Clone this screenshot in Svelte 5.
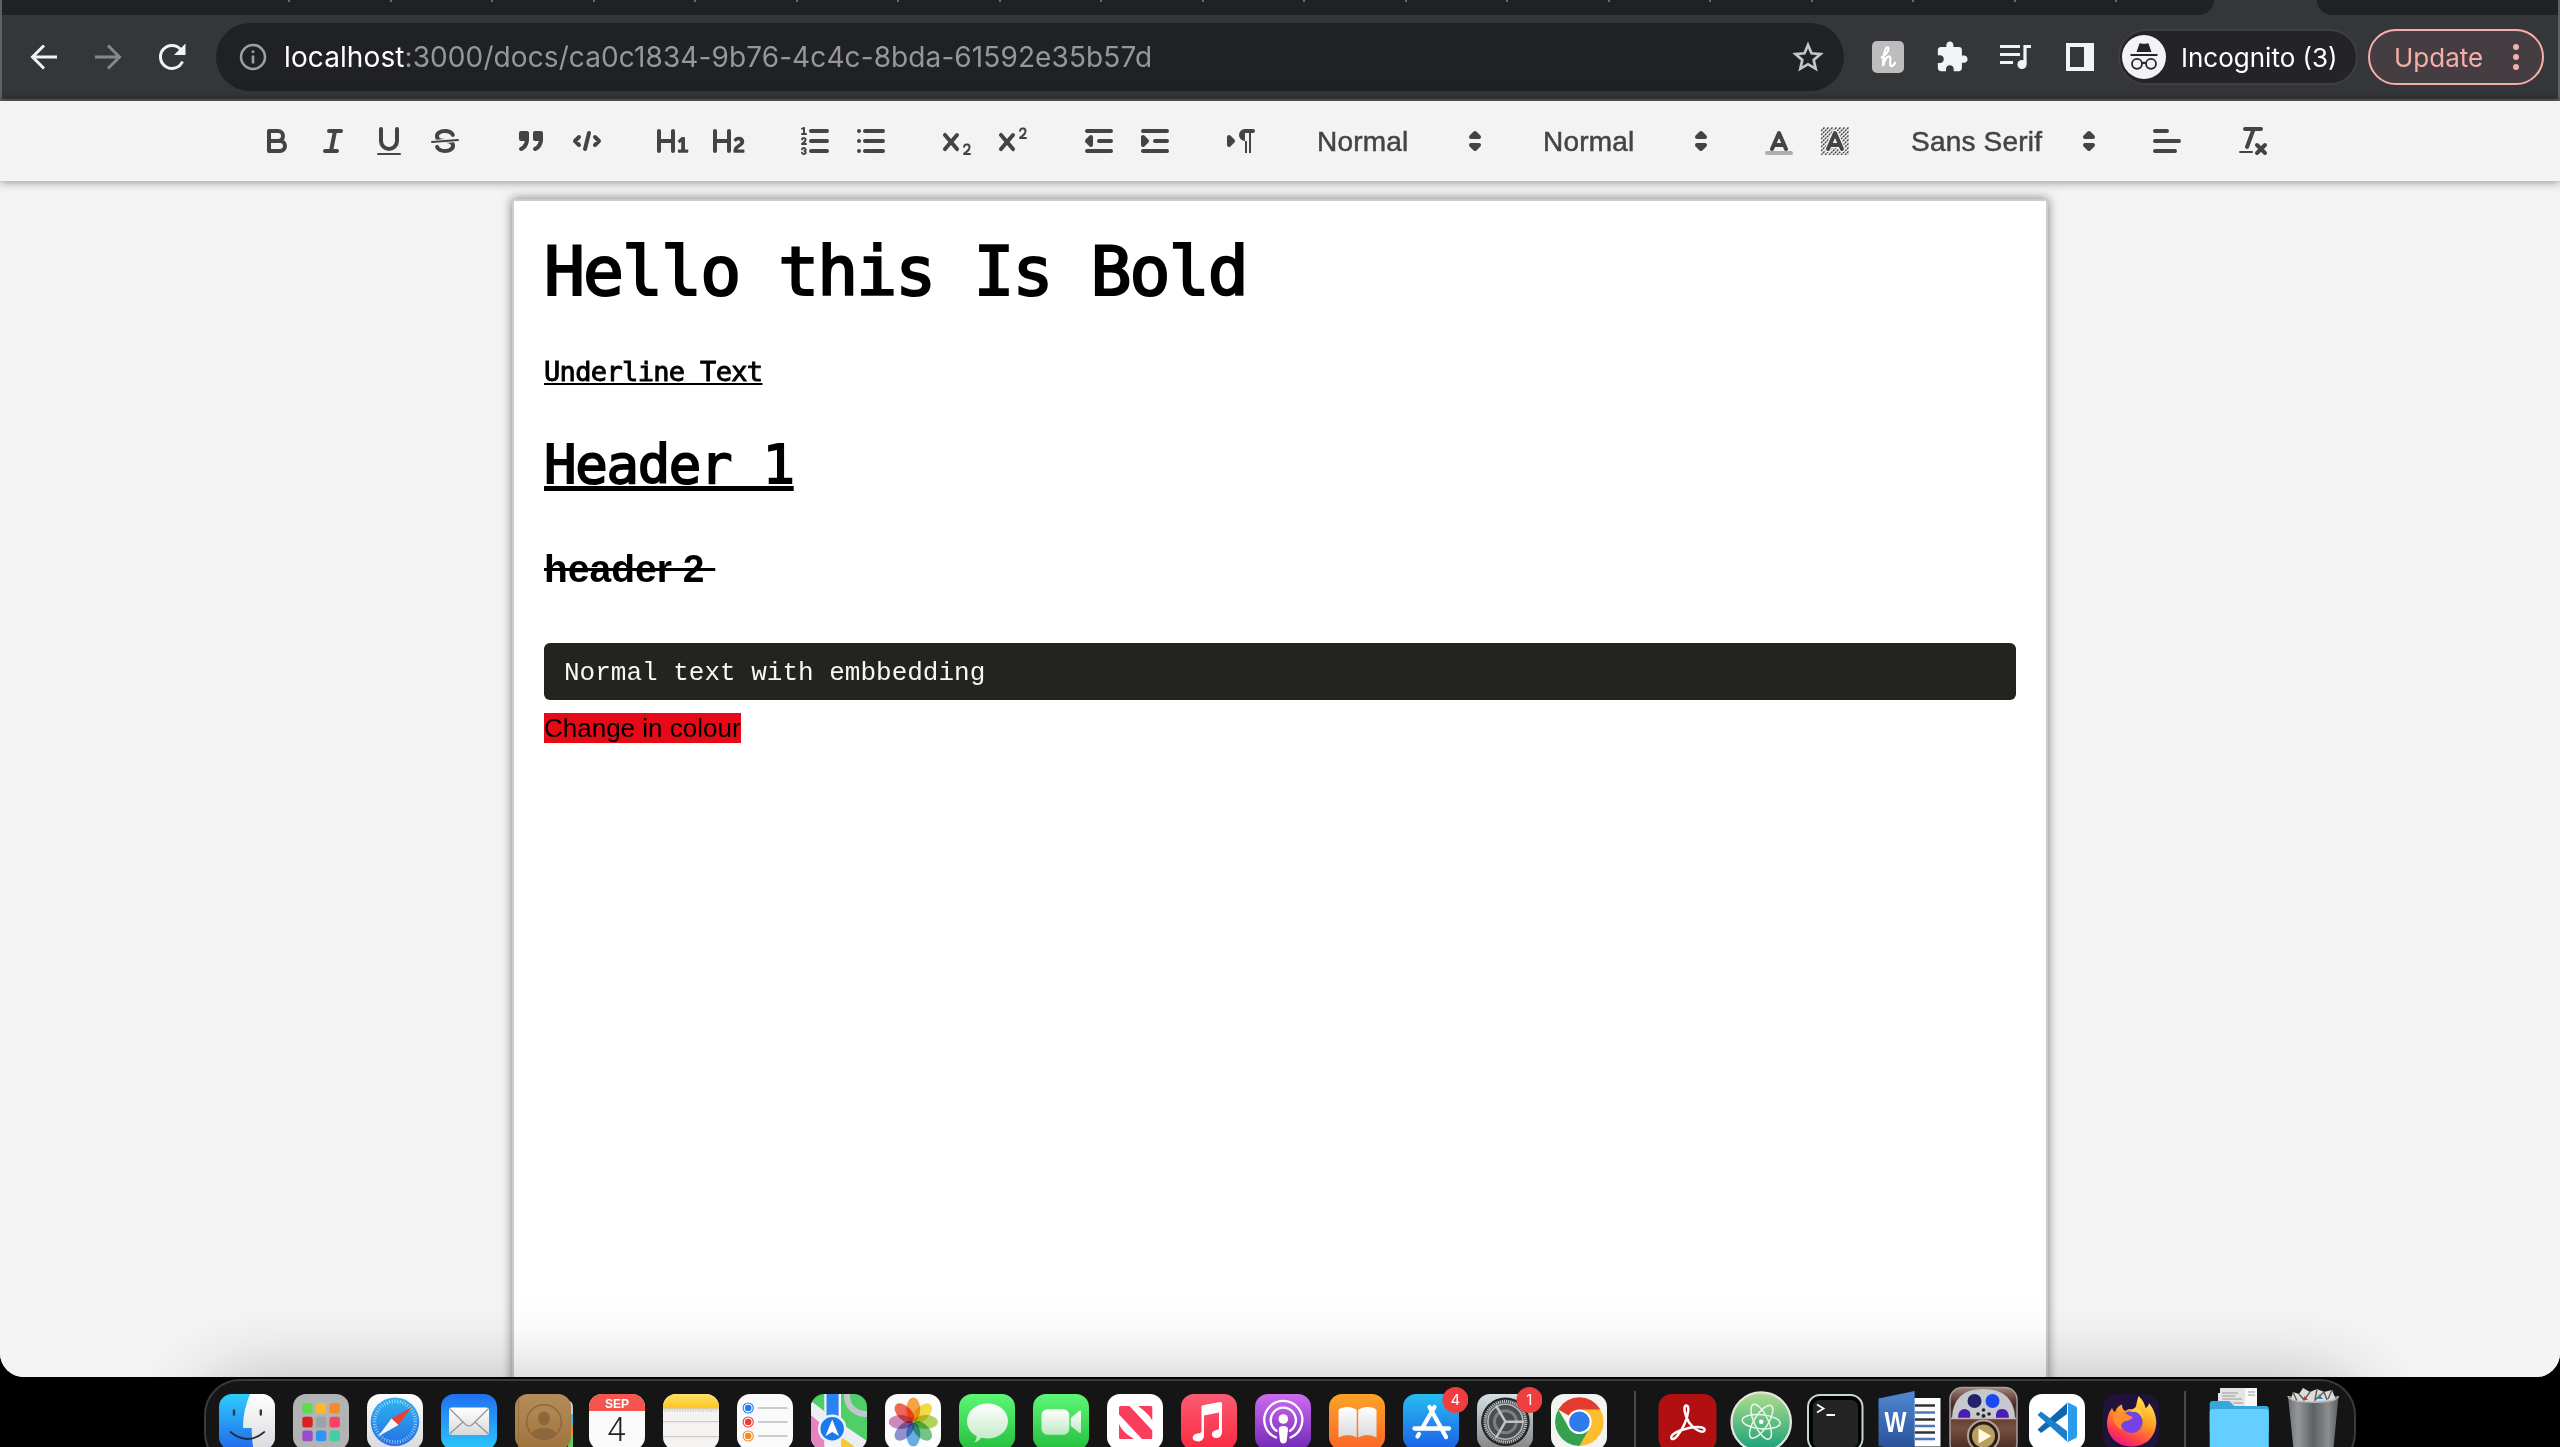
<script>
  const dividers = Array.from({ length: 19 }, (_, i) => i);
  const launch = ['#5fdc4e', '#fdb92e', '#f58a2c', '#dc2020', '#9aa5aa', '#fb4364', '#9a4ccf', '#2f94f5', '#41cfa4'];
  const petals = ['#f89a2c', '#f3d92c', '#a9cf45', '#5fbf7c', '#54a5df', '#8186c8', '#c77bb5', '#f0523f'];
  const ticks = Array.from({ length: 48 }, (_, i) => i * 7.5);
  const hatch = Array.from({ length: 16 }, (_, i) => i * 2);
</script>

{#snippet arrows()}
  <svg class="arrows" viewBox="0 0 18 18"><polygon class="st" points="7 11 9 13 11 11 7 11" /><polygon class="st" points="7 7 9 5 11 7 7 7" /></svg>
{/snippet}

{#snippet cross()}
  <path class="fl" d="M9.65,5.241a1,1,0,0,0-1.409.108L6,7.964,3.759,5.349A1,1,0,0,0,2.192,6.59178Q2.21541,6.6213,2.241,6.649L4.684,9.5,2.241,12.35A1,1,0,0,0,3.71,13.70722q0.02557-.02768.049-0.05722L6,11.036,8.241,13.65a1,1,0,1,0,1.567-1.24277Q9.78459,12.3777,9.759,12.35L7.316,9.5,9.759,6.651A1,1,0,0,0,9.65,5.241Z" />
{/snippet}

<div class="desktop">
  <div class="window">
    <header class="chrome">
      <div class="tabs">
        <div class="tabs-left">{#each dividers as d (d)}<i></i>{/each}</div>
        <div class="tabs-right"></div>
      </div>
      <div class="nav">
        <svg class="nav-ic" width="32" height="32" viewBox="0 0 32 32"><path d="M29 16H5M16 4.500L4.500 16L16 27.500" /></svg>
        <svg class="nav-ic dim" width="32" height="32" viewBox="0 0 32 32"><path d="M3 16H27M16 4.500L27.500 16L16 27.500" /></svg>
        <svg class="nav-ic" width="32" height="32" viewBox="0 0 32 32"><path d="M26.500 20.500A11.500 11.500 0 1 1 24.500 8.200L27 11" /><path class="solid" d="M29.500 2.500V14H18Z" /></svg>
        <div class="url">
          <svg width="30" height="30" viewBox="0 0 30 30"><circle cx="15" cy="15" r="12" fill="none" stroke="#9aa0a6" stroke-width="2.500" /><path d="M15 13.500V21.500M15 8.500V11" stroke="#9aa0a6" stroke-width="2.600" /></svg>
          <span class="addr"><b>localhost</b>:3000/docs/ca0c1834-9b76-4c4c-8bda-61592e35b57d</span>
          <svg class="star" width="32" height="32" viewBox="0 0 32 32"><path d="M16 4L19.500 12.300L28.500 13.100L21.700 19L23.700 27.800L16 23.200L8.300 27.800L10.300 19L3.500 13.100L12.500 12.300Z" fill="none" stroke="#c4c7c9" stroke-width="2.700" /></svg>
        </div>
        <svg class="ext honey" width="32" height="32" viewBox="0 0 32 32"><rect width="32" height="32" rx="5" fill="#bdbdbd" /><path d="M9 17C13 15 18 9 16 6.500C12.500 5 11.500 16 11 25C12 19 15 15 17.500 15.500C20 16 16.500 24 19 25C21 25.500 22.500 23 23.500 21" fill="none" stroke="#fff" stroke-width="2.200" /></svg>
        <svg class="ext puzzle" width="34" height="34" viewBox="0 0 24 24"><path fill="#f1f3f4" d="M20.500 11H19V7c0-1.100-.9-2-2-2h-4V3.500C13 2.120 11.880 1 10.500 1S8 2.120 8 3.500V5H4c-1.100 0-1.990.9-1.990 2v3.800H3.500c1.490 0 2.700 1.210 2.700 2.700s-1.210 2.700-2.700 2.700H2V20c0 1.100.9 2 2 2h3.800v-1.500c0-1.490 1.210-2.700 2.700-2.700 1.490 0 2.700 1.210 2.700 2.700V22H17c1.100 0 2-.9 2-2v-4h1.500c1.380 0 2.500-1.120 2.500-2.500S21.880 11 20.500 11z" /></svg>
        <svg class="ext music" width="34" height="28" viewBox="0 0 34 28"><path d="M1 3.500H21M1 11.500H21M1 19.500H14" stroke="#f1f3f4" stroke-width="3.200" /><path d="M26 21V3.500H32" fill="none" stroke="#f1f3f4" stroke-width="3.200" /><circle cx="23" cy="21.500" r="4.600" fill="#f1f3f4" /></svg>
        <svg class="ext side" width="28" height="28" viewBox="0 0 28 28"><path fill="#f1f3f4" fill-rule="evenodd" d="M0 0H28V28H0ZM4 4V24H18V4Z" /></svg>
        <div class="incog">
          <svg width="44" height="44" viewBox="0 0 44 44"><circle cx="22" cy="22" r="22" fill="#f1f3f4" /><path fill="#242428" d="M14.500 17L17.500 8.500Q18.500 8 20 8.700H24Q25.500 8 26.500 8.500L29.500 17ZM8.500 19H35.500V21H8.500Z" /><g fill="none" stroke="#242428" stroke-width="1.800"><circle cx="15" cy="28.800" r="5" /><circle cx="29" cy="28.800" r="5" /><path d="M20 28.500Q22 27 24 28.500" /></g></svg>
          <span>Incognito (3)</span>
        </div>
        <div class="update"><span>Update</span><svg width="8" height="28" viewBox="0 0 8 28"><g fill="#f6aea9"><circle cx="4" cy="4" r="3" /><circle cx="4" cy="14" r="3" /><circle cx="4" cy="24" r="3" /></g></svg></div>
      </div>
    </header>

    <div class="toolbar">
      <div class="group">
        <button aria-label="bold"><svg viewBox="0 0 18 18"><path class="st" d="M5,4H9.500A2.500,2.500,0,0,1,12,6.500v0A2.500,2.500,0,0,1,9.500,9H5V4Z" /><path class="st" d="M5,9h5.500A2.500,2.500,0,0,1,13,11.500v0A2.500,2.500,0,0,1,10.500,14H5V9Z" /></svg></button>
        <button aria-label="italic"><svg viewBox="0 0 18 18"><path class="st" d="M7 4H13M5 14H11M8 14L10 4" /></svg></button>
        <button aria-label="underline"><svg viewBox="0 0 18 18"><path class="st" d="M5,3V9a4.012,4.012,0,0,0,4,4H9a4.012,4.012,0,0,0,4-4V3" /><rect class="fl" height="1" rx="0.500" width="12" x="3" y="15" /></svg></button>
        <button aria-label="strike"><svg viewBox="0 0 18 18"><path class="st thin" d="M15.500 8.500L2.500 9.500" /><path class="fl" d="M9.007,8C6.542,7.791,6,7.519,6,6.500,6,5.792,7.283,5,9,5c1.571,0,2.765.679,2.969,1.309a1,1,0,0,0,1.900-.617C13.356,4.106,11.354,3,9,3,6.200,3,4,4.538,4,6.500a3.200,3.200,0,0,0,.5,1.843Z" /><path class="fl" d="M8.984,10C11.457,10.208,12,10.479,12,11.500c0,0.708-1.283,1.500-3,1.500-1.571,0-2.765-.679-2.969-1.309a1,1,0,1,0-1.900.617C4.644,13.894,6.646,15,9,15c2.800,0,5-1.538,5-3.500a3.200,3.200,0,0,0-.5-1.843Z" /></svg></button>
      </div>
      <div class="group">
        <button aria-label="quote"><svg viewBox="0 0 18 18"><g class="st fl"><rect height="3" width="3" x="4" y="5" /><rect height="3" width="3" x="11" y="5" /><path d="M7,8c0,4.031-3,5-3,5" /><path d="M14,8c0,4.031-3,5-3,5" /></g></svg></button>
        <button aria-label="code"><svg viewBox="0 0 18 18"><path class="st" d="M5 7L3 9L5 11M13 7L15 9L13 11M10 5L8 13" /></svg></button>
      </div>
      <div class="group">
        <button aria-label="heading one"><svg viewBox="0 0 18 18"><path class="fl" d="M10,4V14a1,1,0,0,1-2,0V10H3v4a1,1,0,0,1-2,0V4A1,1,0,0,1,3,4V8H8V4a1,1,0,0,1,2,0Zm6.06787,9.209H14.98975V7.59863a.54085.54085,0,0,0-.605-.60547h-.62744a1.01119,1.01119,0,0,0-.748.29688L11.645,8.56641a.5435.5435,0,0,0-.022.8584l.28613.30762a.53861.53861,0,0,0,.84717.0332l.09912-.08789a1.2137,1.2137,0,0,0,.2417-.35254h.02246s-.01123.30859-.01123.60547V13.209H12.041a.54085.54085,0,0,0-.605.60547v.43945a.54085.54085,0,0,0,.605.60547h4.02686a.54085.54085,0,0,0,.605-.60547v-.43945A.54085.54085,0,0,0,16.06787,13.209Z" /></svg></button>
        <button aria-label="heading two"><svg viewBox="0 0 18 18"><path class="fl" d="M16.73975,13.81445v.43945a.54085.54085,0,0,1-.605.60547H11.855a.58392.58392,0,0,1-.64893-.60547V14.0127c0-2.90527,3.39941-3.42187,3.39941-4.55469a.77675.77675,0,0,0-.84717-.78125,1.17684,1.17684,0,0,0-.83594.38477c-.2749.26367-.561.374-.85791.13184l-.4292-.34082c-.30811-.24219-.38525-.51758-.1543-.81445a2.97155,2.97155,0,0,1,2.45361-1.17676,2.45393,2.45393,0,0,1,2.68408,2.40918c0,2.45312-3.1792,2.92676-3.27832,3.93848h2.79443A.54085.54085,0,0,1,16.73975,13.81445ZM9,3A.99974.99974,0,0,0,8,4V8H3V4A1,1,0,0,0,1,4V14a1,1,0,0,0,2,0V10H8v4a1,1,0,0,0,2,0V4A.99974.99974,0,0,0,9,3Z" /></svg></button>
      </div>
      <div class="group">
        <button aria-label="ordered list"><svg viewBox="0 0 18 18"><path class="st" d="M7 4H15M7 9H15M7 14H15" /><path class="st thin" d="M2.500 5.500H4.500" /><path class="fl" d="M3.500,6A0.500,0.500,0,0,1,3,5.500V3.085l-0.276.138A0.500,0.500,0,0,1,2.053,3c-0.124-.247-0.023-0.324.224-0.447l1-.5A0.500,0.500,0,0,1,4,2.500v3A0.500,0.500,0,0,1,3.500,6Z" /><path class="st thin" d="M4.500,10.500h-2c0-.234,1.850-1.076,1.850-2.234A0.959,0.959,0,0,0,2.500,8.156" /><path class="st thin" d="M2.500,14.846a0.959,0.959,0,0,0,1.850-.109A0.700,0.700,0,0,0,3.750,14a0.688,0.688,0,0,0,.6-0.736,0.959,0.959,0,0,0-1.850-.109" /></svg></button>
        <button aria-label="bullet list"><svg viewBox="0 0 18 18"><path class="st" d="M6 4H15M6 9H15M6 14H15M3 4H3.010M3 9H3.010M3 14H3.010" /></svg></button>
      </div>
      <div class="group">
        <button aria-label="subscript"><svg viewBox="0 0 18 18"><path class="fl" d="M15.500,15H13.861a3.858,3.858,0,0,0,1.914-2.975,1.800,1.800,0,0,0-1.600-1.751A1.921,1.921,0,0,0,12.021,11.700a0.500,0.500,0,1,0,.957.291h0a0.914,0.914,0,0,1,1.053-.725,0.810,0.810,0,0,1,.744.762c0,1.076-1.16971,1.86982-1.93971,2.43082A1.45639,1.45639,0,0,0,12,15.500a0.500,0.500,0,0,0,.5.5h3A0.500,0.500,0,0,0,15.500,15Z" />{@render cross()}</svg></button>
        <button aria-label="superscript"><svg viewBox="0 0 18 18"><path class="fl" d="M15.500,7H13.861a4.015,4.015,0,0,0,1.914-2.975,1.800,1.800,0,0,0-1.600-1.751A1.922,1.922,0,0,0,12.021,3.700a0.500,0.500,0,1,0,.957.291,0.917,0.917,0,0,1,1.053-.725,0.810,0.810,0,0,1,.744.762c0,1.077-1.164,1.925-1.934,2.486A1.423,1.423,0,0,0,12,7.500a0.500,0.500,0,0,0,.5.5h3A0.500,0.500,0,0,0,15.500,7Z" />{@render cross()}</svg></button>
      </div>
      <div class="group">
        <button aria-label="outdent"><svg viewBox="0 0 18 18"><path class="st" d="M3 14H15M3 4H15M9 9H15" /><polygon class="st fl" points="5 7 5 11 3 9" /></svg></button>
        <button aria-label="indent"><svg viewBox="0 0 18 18"><path class="st" d="M3 14H15M3 4H15M9 9H15" /><polygon class="st fl" points="3 7 3 11 5 9" /></svg></button>
      </div>
      <div class="group">
        <button aria-label="direction"><svg viewBox="0 0 18 18"><polygon class="st fl" points="3 11 5 9 3 7" /><path class="st" d="M15 4H11" /><path class="fl" d="M11,3a3,3,0,0,0,0,6h1V3H11ZM11 4h1v11h-1ZM13 4h1v11h-1Z" /></svg></button>
      </div>
      <div class="group"><div class="picker">Normal{@render arrows()}</div></div>
      <div class="group"><div class="picker">Normal{@render arrows()}</div></div>
      <div class="group">
        <button aria-label="color"><svg viewBox="0 0 18 18"><path class="st faint" d="M3 15H15" /><path class="st" d="M5.500 13L9 5L12.500 13M11.630 11H6.380" /></svg></button>
        <button aria-label="background"><svg viewBox="0 0 18 18"><clipPath id="hatch"><rect x="2" y="2" width="14" height="14" /></clipPath><g clip-path="url(#hatch)">{#each hatch as h (h)}<path class="st hair" d="M{h - 12} 16L{h + 2} 2" />{/each}</g><path class="st halo" d="M5.500 13L9 5L12.500 13M11.630 11H6.380" /><path class="st" d="M5.500 13L9 5L12.500 13M11.630 11H6.380" /></svg></button>
      </div>
      <div class="group"><div class="picker wide">Sans Serif{@render arrows()}</div></div>
      <div class="group"><button aria-label="align"><svg viewBox="0 0 18 18"><path class="st" d="M3 9H15M3 14H13M3 4H9" /></svg></button></div>
      <div class="group"><button aria-label="clean"><svg viewBox="0 0 18 18"><path class="st" d="M5 3H13M6 12L9.350 3M11 11L15 15M15 11L11 15" /><rect class="fl" height="1" rx="0.500" width="7" x="2" y="14" /></svg></button></div>
    </div>

    <main class="canvas">
      <article class="paper">
        <p class="mono huge">Hello this Is Bold</p>
        <p class="mono under small">Underline Text</p>
        <h1 class="mono under">Header 1</h1>
        <h2><s>header 2&nbsp;</s></h2>
        <pre>Normal text with embbedding</pre>
        <p class="last"><mark>Change in colour</mark></p>
      </article>
    </main>
  </div>

  <div class="dock">
    <svg viewBox="0 0 74 70">
      <defs>
        <clipPath id="tile"><rect x="9" y="13" width="56" height="56" rx="13" /></clipPath>
        <linearGradient id="blue" x2="0" y2="1"><stop stop-color="#2bcdfb" /><stop offset="1" stop-color="#2368ec" /></linearGradient>
        <linearGradient id="mail" x2="0" y2="1"><stop stop-color="#2070f0" /><stop offset="1" stop-color="#2cc8fc" /></linearGradient>
        <linearGradient id="safari" x2="0" y2="1"><stop stop-color="#2fb3f3" /><stop offset="1" stop-color="#2470e2" /></linearGradient>
        <linearGradient id="green" x2="0" y2="1"><stop stop-color="#5df777" /><stop offset="1" stop-color="#26bf3c" /></linearGradient>
        <linearGradient id="paper" x2="0" y2="1"><stop stop-color="#fff" /><stop offset="1" stop-color="#d9d9dc" /></linearGradient>
        <linearGradient id="pale" x2="0" y2="1"><stop stop-color="#fff" /><stop offset="1" stop-color="#bfe8c4" /></linearGradient>
        <linearGradient id="brown" x2="0" y2="1"><stop stop-color="#b58d59" /><stop offset="1" stop-color="#a0733e" /></linearGradient>
        <linearGradient id="yellow" x2="0" y2="1"><stop stop-color="#fee16b" /><stop offset="1" stop-color="#fdc51c" /></linearGradient>
        <linearGradient id="red" x2="0" y2="1"><stop stop-color="#fb5c74" /><stop offset="1" stop-color="#f92940" /></linearGradient>
        <linearGradient id="purple" x2="0" y2="1"><stop stop-color="#cd6cf0" /><stop offset="1" stop-color="#7128b5" /></linearGradient>
        <linearGradient id="orange" x2="0" y2="1"><stop stop-color="#fda328" /><stop offset="1" stop-color="#fa6628" /></linearGradient>
        <linearGradient id="store" x2="0" y2="1"><stop stop-color="#26bdf1" /><stop offset="1" stop-color="#1c5fe6" /></linearGradient>
        <linearGradient id="steel" x2="0" y2="1"><stop stop-color="#d3e0e6" /><stop offset="1" stop-color="#858585" /></linearGradient>
        <linearGradient id="atom" x2="0" y2="1"><stop stop-color="#b0dd8e" /><stop offset="1" stop-color="#14a077" /></linearGradient>
        <linearGradient id="word" x2="0" y2="1"><stop stop-color="#5087d2" /><stop offset="1" stop-color="#274f96" /></linearGradient>
        <linearGradient id="wood" x2="0" y2="1"><stop stop-color="#a2867a" /><stop offset="0.250" stop-color="#4b2925" /><stop offset="0.600" stop-color="#76503f" /><stop offset="1" stop-color="#3b211a" /></linearGradient>
        <linearGradient id="fox" x1="0.800" y1="0" x2="0.300" y2="1"><stop stop-color="#fff04b" /><stop offset="0.450" stop-color="#ff9a26" /><stop offset="0.800" stop-color="#ff3b4d" /><stop offset="1" stop-color="#e3168b" /></linearGradient>
        <linearGradient id="bin"><stop stop-color="#6e7275" /><stop offset="0.200" stop-color="#94989b" /><stop offset="0.500" stop-color="#5d6164" /><stop offset="0.800" stop-color="#8b8f92" /><stop offset="1" stop-color="#5a5d60" /></linearGradient>
      </defs>
      <g clip-path="url(#tile)"><rect x="9" y="13" width="56" height="56" fill="url(#blue)" /><path d="M40 13Q33 30 33 45.700Q33 47 34.500 47H41.700Q41.500 60 44 70H66V13Z" fill="url(#paper)" /></g>
      <path d="M24 29.500V33.500M50.800 29.500V33.500" stroke="#263c53" stroke-width="2.400" stroke-linecap="round" /><path d="M20.500 51Q37.500 65 54.300 51" fill="none" stroke="#1e2e44" stroke-width="1.700" stroke-linecap="round" />
    </svg>
    <svg viewBox="0 0 74 70"><rect x="9" y="13" width="56" height="56" rx="13" fill="#b2b3b4" />{#each launch as c, i (i)}<rect x={18.3 + (i % 3) * 13.6} y={22 + Math.floor(i / 3) * 13.8} width="10.400" height="10.600" rx="2.500" fill={c} />{/each}</svg>
    <svg viewBox="0 0 74 70"><rect x="9" y="13" width="56" height="56" rx="13" fill="url(#paper)" /><circle cx="37" cy="40.700" r="24.300" fill="url(#safari)" />{#each ticks as t (t)}<path d="M37 18.500V22" stroke="#fff" stroke-opacity=".75" stroke-width=".7" transform="rotate({t} 37 40.7)" />{/each}<path d="M54 26L40.500 44L33.500 37.500Z" fill="#e9403a" /><path d="M20 55.500L33.500 37.500L40.500 44Z" fill="#f6f6f8" /></svg>
    <svg viewBox="0 0 74 70"><rect x="9" y="13" width="56" height="56" rx="13" fill="url(#mail)" /><rect x="17" y="26.500" width="40" height="27.500" rx="3" fill="url(#paper)" /><path d="M18 28L33.500 43.500Q37 46.500 40.500 43.500L56 28M18 52.500L31 41M56 52.500L43 41" fill="none" stroke="#8f9499" stroke-width="1.200" /></svg>
    <svg viewBox="0 0 74 70"><path d="M62 20h2q3 2 3 6v7h-5z" fill="#c9c9c9" /><path d="M62 33h5v11h-5z" fill="#45b7e6" /><path d="M62 44h5v10h-5z" fill="#f08a24" /><path d="M62 54h5v12h-5z" fill="#58d063" /><rect x="9" y="13" width="56" height="56" rx="13" fill="url(#brown)" /><path d="M12.500 17V66" stroke="#96703f" /><circle cx="38" cy="41" r="17.300" fill="none" stroke="#88633a" stroke-width="1.200" /><ellipse cx="38" cy="37.500" rx="6" ry="7" fill="#8d683c" /><path d="M25.500 52Q30 47 38 47Q46 47 50.500 52Q45 58 38 58Q31 58 25.500 52Z" fill="#8d683c" /></svg>
    <svg viewBox="0 0 74 70"><rect x="9" y="13" width="56" height="56" rx="13" fill="#fafafa" /><path clip-path="url(#tile)" d="M9 13H65V30H9Z" fill="#f4564f" /><text x="37" y="26.500" class="sep">SEP</text><text x="36.500" y="60" class="day">4</text></svg>
    <svg viewBox="0 0 74 70"><rect x="9" y="13" width="56" height="56" rx="13" fill="#f4f3f1" /><path clip-path="url(#tile)" d="M9 13H65V27.500H9Z" fill="url(#yellow)" /><path d="M9 28H65M9 40.700H65M9 55.700H65" stroke="#c4c2c0" /><path d="M10 30H64" stroke="#aaa" stroke-dasharray="1 1.600" /></svg>
    <svg viewBox="0 0 74 70"><rect x="9" y="13" width="56" height="56" rx="13" fill="#fafafa" /><path d="M30 27H59.500M30 41H59.500M30 55H59.500" stroke="#bcbdc0" stroke-width="1.400" /><g stroke="#fff" stroke-width="1.200"><circle cx="20.200" cy="27" r="5" fill="#1b7cf5" stroke="#1b7cf5" /><circle cx="20.200" cy="27" r="3.900" fill="#1b7cf5" /><circle cx="20.200" cy="41" r="5" fill="#ee3a36" stroke="#ee3a36" /><circle cx="20.200" cy="41" r="3.900" fill="#ee3a36" /><circle cx="20.200" cy="55" r="5" fill="#f08d24" stroke="#f08d24" /><circle cx="20.200" cy="55" r="3.900" fill="#f08d24" /></g></svg>
    <svg viewBox="0 0 74 70"><g clip-path="url(#tile)"><rect x="9" y="13" width="56" height="56" fill="#4fcf66" /><path d="M9 20L22 30V70H9Z" fill="#f3f3f6" /><path d="M9 34L25 48V70H9Z" fill="#e684c0" /><path d="M9 22L68 62V78L9 33Z" fill="#eceef3" /><path d="M39 56L58 70H39Z" fill="#fdc82f" /><circle cx="63" cy="15" r="18" fill="none" stroke="#c3c6d0" stroke-width="6" /><path d="M22.300 13H39V70H22.300Z" fill="#f3f3f6" /><path d="M24.500 13H36.600V45H24.500Z" fill="#2b82f3" /></g><circle cx="30.200" cy="47.700" r="13" fill="#1c79ee" stroke="#eef0f4" stroke-width="2.500" /><path d="M30.200 38.500L37 55L30.200 51L23.500 55Z" fill="#fff" /></svg>
    <svg viewBox="0 0 74 70"><rect x="9" y="13" width="56" height="56" rx="13" fill="#fcfcfc" />{#each petals as c, i (i)}<ellipse class="petal" cx="37.300" cy="28.500" rx="7" ry="12" fill={c} transform="rotate({i * 45} 37.3 41)" />{/each}</svg>
    <svg viewBox="0 0 74 70"><rect x="9" y="13" width="56" height="56" rx="13" fill="url(#green)" /><path d="M37.500 22.500C49 22.500 58 30 58 40C58 50 49 57.500 37.500 57.500C35 57.500 33 57.200 31 56.600Q29 60.500 24 61.500Q27 58.500 26.500 55C20.500 52 17 46.500 17 40C17 30 26 22.500 37.500 22.500Z" fill="url(#pale)" /></svg>
    <svg viewBox="0 0 74 70"><rect x="9" y="13" width="56" height="56" rx="13" fill="url(#green)" /><rect x="17.500" y="28.300" width="27.800" height="25.500" rx="6" fill="url(#pale)" /><path d="M46.800 37L55 30Q57 29 57 31V50.500Q57 53 55 51.500L46.800 45Z" fill="url(#pale)" /></svg>
    <svg viewBox="0 0 74 70"><rect x="9" y="13" width="56" height="56" rx="13" fill="#fff" /><path fill="#f93e5d" d="M21 26.500Q21 25 22.500 25H31.500L54.300 49.500V56.500Q54.300 58 52.800 58H44L21 33.500ZM40 25H52.800Q54.300 25 54.300 26.500V39.500Q51 33 40 25ZM21 43V56.500Q21 58 22.500 58H36Q24 51 21 43Z" /></svg>
    <svg viewBox="0 0 74 70"><rect x="9" y="13" width="56" height="56" rx="13" fill="url(#red)" /><path fill="#fff" d="M29.500 26Q29.500 24.500 31 24.200L48 21Q50 20.700 50 22.500V50.500C50 55 47.500 57 44.500 57C38.500 57 38.500 50 44 49.200C46.500 48.700 47 48 47 46.500V31.500L32 34.500V54C32 58.500 29 60.500 26 60.500C19 60.500 19 53.500 25.500 52.600C28.500 52 29.500 51.500 29.500 50Z" /></svg>
    <svg viewBox="0 0 74 70"><rect x="9" y="13" width="56" height="56" rx="13" fill="url(#purple)" /><g fill="none" stroke="#fff" stroke-width="2.300" stroke-linecap="round"><path d="M30 56.500A19 19 0 1 1 44.600 56.500" /><path d="M30.500 49.800A12.600 12.600 0 1 1 44.100 49.800" /></g><circle cx="37.300" cy="38" r="4.800" fill="#fff" /><path d="M32.700 48Q33 45 37.300 45Q41.700 45 42 48L40.700 60Q40 62.500 37.300 62.500Q34.700 62.500 34 60Z" fill="#fff" /></svg>
    <svg viewBox="0 0 74 70"><rect x="9" y="13" width="56" height="56" rx="13" fill="url(#orange)" /><path d="M36.700 29Q33 26 27.500 26Q21 26 18.500 29V56.500Q23 54 27.500 54Q33 54 36.700 56.500ZM38.200 29Q42 26 47.500 26Q54 26 56.500 29V56.500Q52 54 47.500 54Q42 54 38.200 56.500Z" fill="url(#paper)" /></svg>
    <svg viewBox="0 0 74 70"><rect x="9" y="13" width="56" height="56" rx="13" fill="url(#store)" /><path d="M35.500 26L52 56M40.500 26L28 47.500M25 53L23.500 55.500M20.500 47.500H55" fill="none" stroke="#fff" stroke-width="4.300" stroke-linecap="round" /><circle cx="61.400" cy="19" r="13" fill="#f03e3e" /><text x="61.400" y="24" class="badge">4</text></svg>
    <svg viewBox="0 0 74 70"><rect x="9" y="13" width="56" height="56" rx="13" fill="url(#steel)" /><circle cx="37.400" cy="40.700" r="24.300" fill="#242628" /><circle cx="37.400" cy="40.700" r="20.500" fill="#55585a" stroke="#bcc0c2" stroke-width="3" stroke-dasharray="1.200 .9" /><circle cx="37.400" cy="40.700" r="17.500" fill="#4a4c4e" stroke="#b4b8ba" stroke-width="1.500" /><circle cx="37.400" cy="40.700" r="11" fill="none" stroke="#7c8082" stroke-width="3" /><path d="M37.400 40.700H56M37.400 40.700L28 24.500M37.400 40.700L28 57" stroke="#c0c3c5" stroke-width="2.500" /><circle cx="61.400" cy="19" r="13" fill="#f03e3e" /><text x="61.400" y="24" class="badge">1</text></svg>
    <svg viewBox="0 0 74 70"><rect x="9" y="13" width="56" height="56" rx="13" fill="#f3f3f2" /><path d="M37.400 40.700L16.300 28.500A24.300 24.300 0 0 1 58.400 28.500Z" fill="#e33b2e" /><path d="M37.400 28.500H58.400A24.300 24.300 0 0 1 37.400 65L47.900 46.800Z" fill="#fcbd2e" /><path d="M26.900 46.800L16.300 28.500A24.300 24.300 0 0 0 37.400 65L47.900 46.800Z" fill="#34a14d" /><circle cx="37.400" cy="40.700" r="12.300" fill="#fff" /><circle cx="37.400" cy="40.700" r="10.300" fill="#2f7bea" /></svg>
    <span class="rule"></span>
    <svg viewBox="0 0 74 70"><rect x="8.500" y="13" width="58" height="58" rx="13" fill="#b11012" /><path d="M35.800 24.500C40 23.500 38.500 34 34.500 43C30.500 52 24 60 21.500 57.500C19 54 29 49 39 47C48 45 56 46 54.500 49.500C52.500 53 43.500 48 39 41.500C35 35 33 25.500 35.800 24.500Z" fill="none" stroke="#fff" stroke-width="2.500" /></svg>
    <svg viewBox="0 0 74 70"><circle cx="37.200" cy="41" r="29.700" fill="url(#atom)" stroke="#e3e4e2" stroke-width="2.300" /><g fill="none" stroke="#e8f8e8" stroke-width="1.500"><ellipse cx="37.200" cy="40.700" rx="19" ry="7" transform="rotate(5 37.200 40.700)" /><ellipse cx="37.200" cy="40.700" rx="19" ry="7" transform="rotate(65 37.200 40.700)" /><ellipse cx="37.200" cy="40.700" rx="19" ry="7" transform="rotate(122 37.200 40.700)" /></g><circle cx="37.200" cy="40.700" r="2.300" fill="#fff" /></svg>
    <svg viewBox="0 0 74 70"><rect x="10" y="14" width="54.500" height="56" rx="12" fill="#000" stroke="#c7d6da" stroke-width="2" /><rect x="14.700" y="19" width="45.500" height="48" rx="7" fill="#242424" /><path d="M19 23.500L25.500 27.500L19 31.500M28.500 34H37" fill="none" stroke="#fff" stroke-width="1.800" /></svg>
    <svg viewBox="0 0 74 70"><rect x="40" y="17" width="28.500" height="48.500" fill="#fdfdfd" /><path d="M43 24.500H63M43 38.500H63M43 51.500H63" stroke="#333" stroke-width="2.500" /><path d="M43 31.500H63M43 45H63M43 58H63" stroke="#4f75b4" stroke-width="2.500" /><path d="M6.500 17.500L42.700 10V70L6.500 65Z" fill="url(#word)" /><text x="23.500" y="51" class="word" textLength="22" lengthAdjust="spacingAndGlyphs">W</text></svg>
    <svg viewBox="0 0 74 70"><rect x="4" y="6.500" width="67" height="68" rx="12" fill="url(#wood)" stroke="#a79d99" stroke-width="1.500" /><path d="M6 37Q7 8 37 8Q68 8 69 37Z" fill="#c6c8ce" /><ellipse cx="28.500" cy="20" rx="7" ry="7" fill="#25206a" /><ellipse cx="46.500" cy="20" rx="7" ry="7" fill="#1b48f0" /><path d="M12 37Q12 28 19 28Q26 29 24 37ZM50 37Q49 28 56 28Q63 28 63 37Z" fill="#4b1bb6" /><g fill="#26262b"><circle cx="37.500" cy="29" r="1.800" /><circle cx="32" cy="33" r="1.800" /><circle cx="43" cy="33" r="1.800" /><circle cx="37.500" cy="35" r="2" /></g><path d="M5 37.500H70" stroke="#c5bab5" stroke-width="1.500" /><circle cx="37.500" cy="55" r="15.500" fill="#2b1c18" stroke="#b2a598" stroke-width="2" /><circle cx="37.500" cy="55" r="11.500" fill="#b99e63" /><path d="M32.500 47.500L45.500 55L32.500 62.500Z" fill="#fff9dd" /></svg>
    <svg viewBox="0 0 74 70"><rect x="9" y="13" width="56" height="56" rx="13" fill="#fff" /><path d="M47 22L17.500 48.500L21 52L47 33Z" fill="#0f66b0" /><path d="M47 60.500L17.500 34L21 30.500L47 50Z" fill="#1a80cc" /><path d="M47 21L56 25.500Q57 26 57 27.500V55Q57 56.500 56 57L47 61.500Q48 60 48 58V25Q48 22.500 47 21Z" fill="#2b9cec" /></svg>
    <svg viewBox="0 0 74 70"><rect x="9" y="13" width="56" height="56" rx="13" fill="#20123a" /><path d="M44.500 15Q50 20 51.500 27Q55 25 55 22Q62 31 62.300 41C62 56 52 65.500 37.500 65.500C23 65.500 13 55 13 42Q13 34 18 27Q19 30 21 31Q23 25 28 23.500Q28 28 31 30L35 28Q40 29 42 25Q43 20 44.500 15Z" fill="url(#fox)" /><circle cx="37.500" cy="41" r="11" fill="#7542e5" /><path d="M19 32Q27 30 31 32Q35 35 39 36Q36 40 31 40Q25 43 28 49Q18 44 19 32Z" fill="#ff8c2d" /><path d="M36 31Q46 29 49 38Q50 31 43 26Z" fill="#ffcf3a" /></svg>
    <span class="rule late"></span>
    <svg viewBox="0 0 74 70"><path d="M18 7H55V34H16V12H18Z" fill="#e4e4e4" /><path d="M43 7H55V34H43Z" fill="#f8f8f6" /><path d="M20 12H36M20 15H33M20 18H40M46 11H53M46 14H53M31 22H41" stroke="#999" stroke-width="1" /><path d="M7.700 23Q7.700 20 10.500 20H26Q28 20 29.500 22L32 25H64Q66.800 25 66.800 28V50H7.700Z" fill="#36a7dc" /><rect x="7.700" y="28" width="59.100" height="46" rx="3" fill="#63ceff" /></svg>
    <svg viewBox="0 0 74 70"><path d="M12 15H62.500L57 72H18Z" fill="url(#bin)" /><path d="M15 19L17 11L23 13L27 7L34 11L41 8L48 11L56 9L60 19Q37 24 15 19Z" fill="#dddedc" /><path d="M23 13L28 19L34 11M41 8L39 19L48 11L51 19M17 11L21 20M56 9L52 18" fill="none" stroke="#66605d" stroke-width="1.500" /><path d="M28 15L32 19H27Z" fill="#c03a31" /><path d="M43 13L47 18H42Z" fill="#2c84b5" /><path d="M12 15Q13 21 37 21Q61 21 62.500 15" fill="none" stroke="#b6babc" stroke-width="1.500" /></svg>
  </div>
</div>

<style>
  :global(body) { margin: 0; background: #000; }
  * { box-sizing: border-box; }
  .desktop { width: 2560px; height: 1447px; overflow: hidden; background: #000; display: flex; flex-direction: column; font-family: "Liberation Sans", Arial, sans-serif; }
  .window { height: 1377px; flex: none; border-radius: 0 0 24px 24px; overflow: hidden; background: #f4f4f4; display: flex; flex-direction: column; }
  svg { display: block; flex: none; }

  .chrome { height: 101px; flex: none; background: #35363a; border: solid #5f6064; border-width: 0 2px 2px; }
  .tabs { height: 15px; display: flex; justify-content: space-between; }
  .tabs-left { width: 2212px; background: #202124; border-bottom-right-radius: 15px; display: flex; gap: 99.500px; padding-left: 286px; }
  .tabs-left i { width: 2px; flex: none; height: 2px; background: #6b6c70; }
  .tabs-right { width: 241px; background: #202124; border-bottom-left-radius: 15px; }
  .nav { height: 84px; display: flex; align-items: center; padding-left: 26px; font-family: Inter, sans-serif; }
  .nav-ic { margin-right: 32px; fill: none; stroke: #f1f3f4; stroke-width: 3; }
  .nav-ic .solid { fill: #f1f3f4; stroke: none; }
  .nav-ic.dim { stroke: #85878a; }
  .url { width: 1628px; height: 68px; border-radius: 34px; background: #202124; display: flex; align-items: center; padding: 0 20px 0 22px; margin-left: -4px; }
  .addr { flex: 1; margin-left: 16px; font-size: 28px; letter-spacing: .1px; color: #95979b; white-space: nowrap; }
  .addr b { font-weight: 400; color: #fff; }
  .honey { margin-left: 28px; }
  .puzzle { margin-left: 31px; }
  .music { margin-left: 30px; }
  .side { margin-left: 33px; }
  .incog { margin-left: 24px; width: 240px; height: 56px; border-radius: 28px; border: 2px solid #3e3f44; background: #242428; display: flex; align-items: center; padding-left: 2px; color: #fff; font-size: 26px; white-space: nowrap; }
  .incog span { margin-left: 15px; letter-spacing: 0; }
  .update { margin-left: 10px; width: 176px; height: 56px; border-radius: 28px; border: 2px solid #f6aea9; background: #443d41; color: #f6aea9; display: flex; align-items: center; justify-content: space-between; padding: 0 22px 0 24px; font-size: 26px; }

  .toolbar { height: 80px; flex: none; display: flex; align-items: center; justify-content: center; background: #f3f3f3; box-shadow: 0 0 10px rgba(0, 0, 0, .5); position: relative; z-index: 1; }
  .group { display: flex; margin-right: 30px; }
  button { width: 56px; height: 48px; padding: 6px 10px; border: 0; background: none; }
  button svg, .arrows { width: 36px; height: 36px; }
  .st { fill: none; stroke: #444; stroke-width: 2; stroke-linecap: round; stroke-linejoin: round; }
  .thin { stroke-width: 1; }
  .hair { stroke-width: .7; stroke-linecap: butt; stroke-dasharray: 1.060 .354; }
  .halo { stroke: #f3f3f3; stroke-width: 3.200; }
  .faint { opacity: .4; }
  .fl { fill: #444; }
  .picker { width: 196px; height: 48px; padding: 2px 2px 0 18px; display: flex; align-items: center; justify-content: space-between; font-size: 28px; font-weight: 500; letter-spacing: .2px; -webkit-text-stroke: .5px #444; color: #444; white-space: nowrap; }
  .picker .arrows { margin-top: -2px; }
  .picker.wide { width: 216px; }

  .canvas { flex: 1; padding: 18px 512px 0; background: #f4f4f4; }
  .paper { height: 1300px; background: #fff; border: 2px solid #ccc; box-shadow: 0 0 10px rgba(0, 0, 0, .5); padding: 25px 30px; color: #000; font-size: 26px; }
  .paper > * { margin: 0; white-space: nowrap; }
  .mono { font-family: "DejaVu Sans Mono", monospace; font-weight: 400; }
  .huge { font-size: 68px; line-height: 92px; letter-spacing: -1.900px; -webkit-text-stroke: 2.200px #000; }
  .small { font-size: 27px; line-height: 37px; letter-spacing: -.65px; -webkit-text-stroke: .9px #000; }
  .under { text-decoration: underline; }
  h1 { font-size: 54px; line-height: 74px; letter-spacing: -1.300px; -webkit-text-stroke: 1.800px #000; }
  h2 { font-size: 39px; line-height: 55px; font-weight: 700; }
  pre { height: 57px; padding: 12px 20px 8px; border-radius: 6px; background: #23241f; color: #f8f8f2; font: 26px/37px "Liberation Mono", monospace; }
  .last { line-height: 37px; }
  mark { background: #e60a17; color: #000; }
  .paper .small { margin-top: 35px; }
  .paper h1 { margin-top: 38px; }
  .paper h2 { margin-top: 39px; }
  .paper pre { margin-top: 47px; }
  .paper .last { margin-top: 10px; }

  .dock { margin: 2px 0 0 204px; width: 2152px; height: 90px; flex: none; border: 2px solid #3a3a3a; border-radius: 36px; background: #151515; display: flex; padding-left: 3.600px; box-shadow: 0 10px 84px rgba(0, 0, 0, .32); position: relative; }
  .dock svg { width: 74px; height: 70px; }
  .rule { width: 2px; height: 60px; margin: 10px 14px 0 18px; background: #4b4b4b; flex: none; }
  .rule.late { margin: 10px 16px 0; }
  .sep { font: 700 12px "Liberation Sans", sans-serif; fill: #fff; text-anchor: middle; }
  .day { font: 300 33px Roboto, Inter, sans-serif; fill: #222; text-anchor: middle; }
  .badge { font: 400 15px Inter, sans-serif; fill: #fff; text-anchor: middle; }
  .word { font: 700 30px "Liberation Sans", sans-serif; fill: #fff; text-anchor: middle; }
  .petal { mix-blend-mode: multiply; opacity: .88; }
</style>
